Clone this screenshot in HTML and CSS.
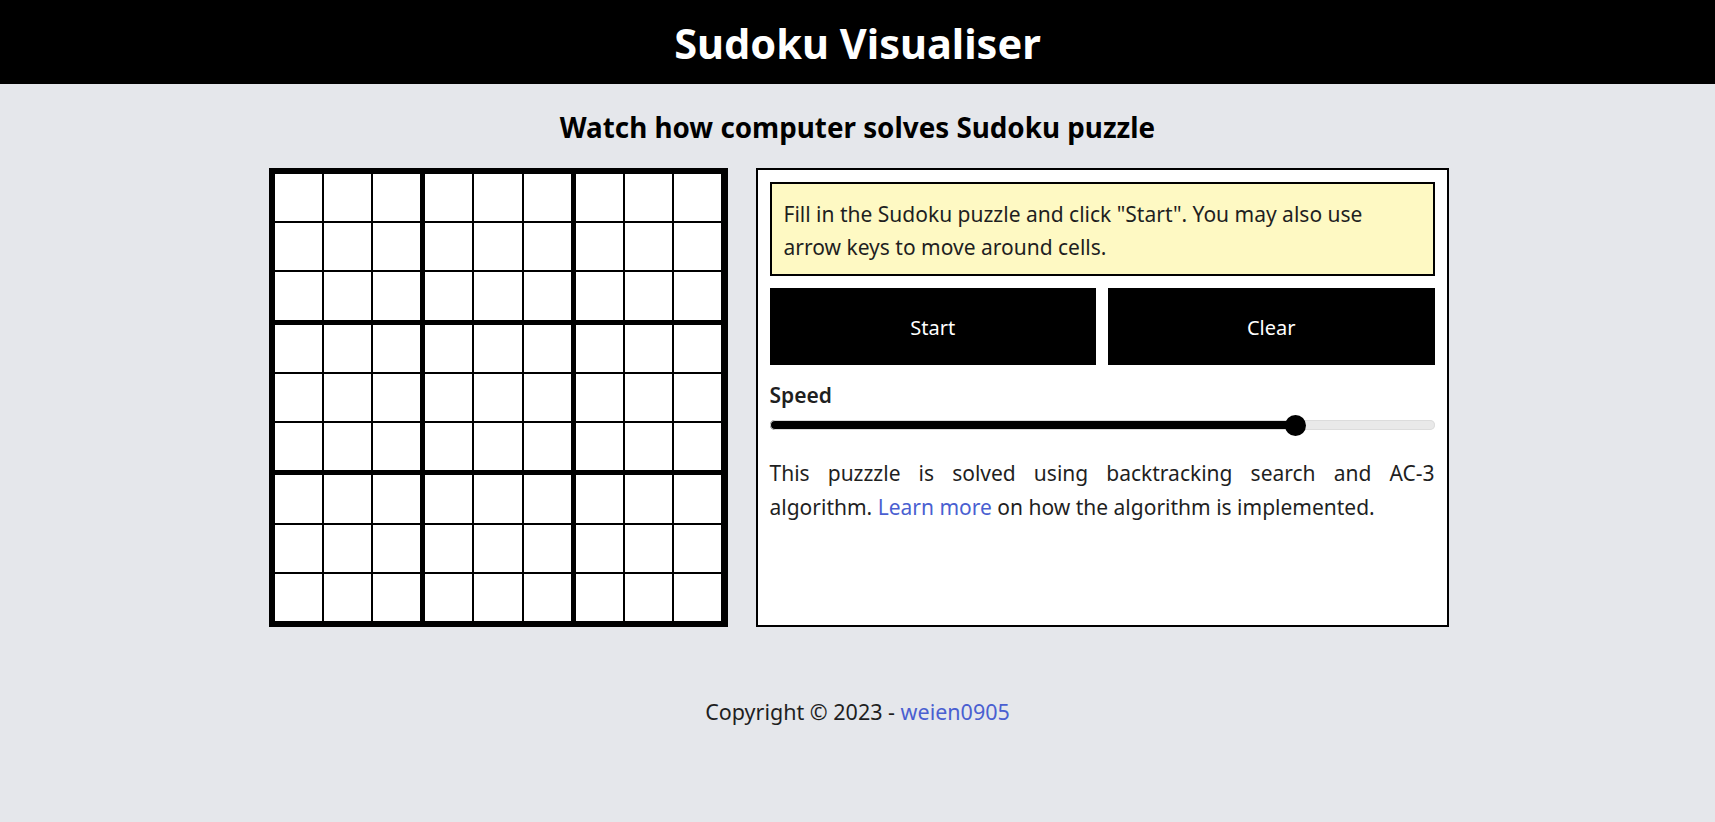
FILE: index.html
```html
<!DOCTYPE html>
<html lang="en">
<head>
<meta charset="utf-8">
<title>Sudoku Visualiser</title>
<link rel="stylesheet" href="styles.css">
</head>
<body>
<header class="topbar"><h1 class="title">Sudoku Visualiser</h1></header>
<main class="main">
  <h2 class="subtitle">Watch how computer solves Sudoku puzzle</h2>
  <div class="workspace">
    <div class="board" id="board"></div>
    <section class="panel">
      <div class="notice">Fill in the Sudoku puzzle and click "Start". You may also use arrow keys to move around cells.</div>
      <div class="actions">
        <button class="btn">Start</button>
        <button class="btn">Clear</button>
      </div>
      <label class="speed-label" for="speed">Speed</label>
      <input class="speed" id="speed" type="range" min="0" max="100" value="80">
      <p class="about">This puzzzle is solved using backtracking search and AC-3 algorithm. <a class="link" href="#">Learn more</a> on how the algorithm is implemented.</p>
    </section>
  </div>
</main>
<footer class="footer">Copyright © 2023 - <a class="link" href="#">weien0905</a></footer>
<script src="script.js"></script>
</body>
</html>
```
FILE: script.js
```js
const board = document.getElementById('board');
for (let b = 0; b < 9; b++) {
  const block = document.createElement('div');
  block.className = 'block';
  for (let c = 0; c < 9; c++) {
    const cell = document.createElement('input');
    cell.className = 'cell';
    cell.maxLength = 1;
    block.appendChild(cell);
  }
  board.appendChild(block);
}
```
FILE: styles.css
```css
* { box-sizing: border-box; }
body {
  margin: 0;
  background: #e5e7eb;
  font-family: "Noto Sans", "Open Sans", sans-serif;
  color: #1f1f1f;
  min-height: 822px;
}
.topbar {
  background: #000;
  height: 84px;
  display: flex;
  align-items: center;
  justify-content: center;
}
.title {
  margin: 4px 0 0;
  color: #fff;
  font-size: 41.5px;
  font-weight: 700;
  line-height: 1;
}
.main {
  display: flex;
  flex-direction: column;
  align-items: center;
}
.subtitle {
  margin: 26px 0 24px;
  font-size: 27.8px;
  line-height: 34px;
  font-weight: 700;
  color: #000;
}
.workspace {
  display: flex;
  gap: 28px;
  margin-left: 2px;
}
.board {
  width: 459px;
  height: 459px;
  background: #000;
  padding: 6px;
  display: grid;
  grid-template-columns: repeat(3, 1fr);
  grid-template-rows: repeat(3, 1fr);
  gap: 5px;
}
.block {
  display: grid;
  grid-template-columns: repeat(3, 1fr);
  grid-template-rows: repeat(3, 1fr);
  gap: 2px;
}
.cell {
  width: 100%;
  height: 100%;
  min-width: 0;
  border: 0;
  margin: 0;
  padding: 0;
  background: #fff;
  text-align: center;
  font: inherit;
  font-size: 24px;
}
.panel {
  width: 693px;
  height: 459px;
  background: #fff;
  border: 2px solid #000;
  padding: 12px;
  display: flex;
  flex-direction: column;
}
.notice {
  background: #fef9c3;
  border: 2px solid #000;
  padding: 14px 40px 10px 12px;
  font-size: 21px;
  line-height: 33px;
  height: 94px;
}
.actions {
  display: flex;
  gap: 12px;
  margin-top: 12px;
}
.btn {
  flex: 1;
  height: 77px;
  background: #000;
  color: #fff;
  border: 0;
  font: inherit;
  font-size: 20px;
  padding-top: 2px;
}
.speed-label {
  margin-top: 16px;
  font-size: 21px;
  font-weight: 600;
  line-height: 28px;
}
.speed {
  -webkit-appearance: none;
  appearance: none;
  width: 100%;
  height: 10px;
  margin: 11px 0 0;
  border-radius: 5px;
  background: linear-gradient(to right, #000 0 79.5%, #e9e9e9 79.5% 100%);
  box-shadow: inset 0 0 0 1px #dcdcdc;
}
.speed::-webkit-slider-thumb {
  -webkit-appearance: none;
  appearance: none;
  width: 21px;
  height: 21px;
  border-radius: 50%;
  background: #000;
}
.about {
  margin: 26px 0 0;
  font-size: 21px;
  line-height: 34px;
  text-align: justify;
}
.link {
  color: #4a5fd1;
  text-decoration: none;
}
.footer {
  text-align: center;
  margin-top: 68px;
  font-size: 21.5px;
  line-height: 34px;
}
```
